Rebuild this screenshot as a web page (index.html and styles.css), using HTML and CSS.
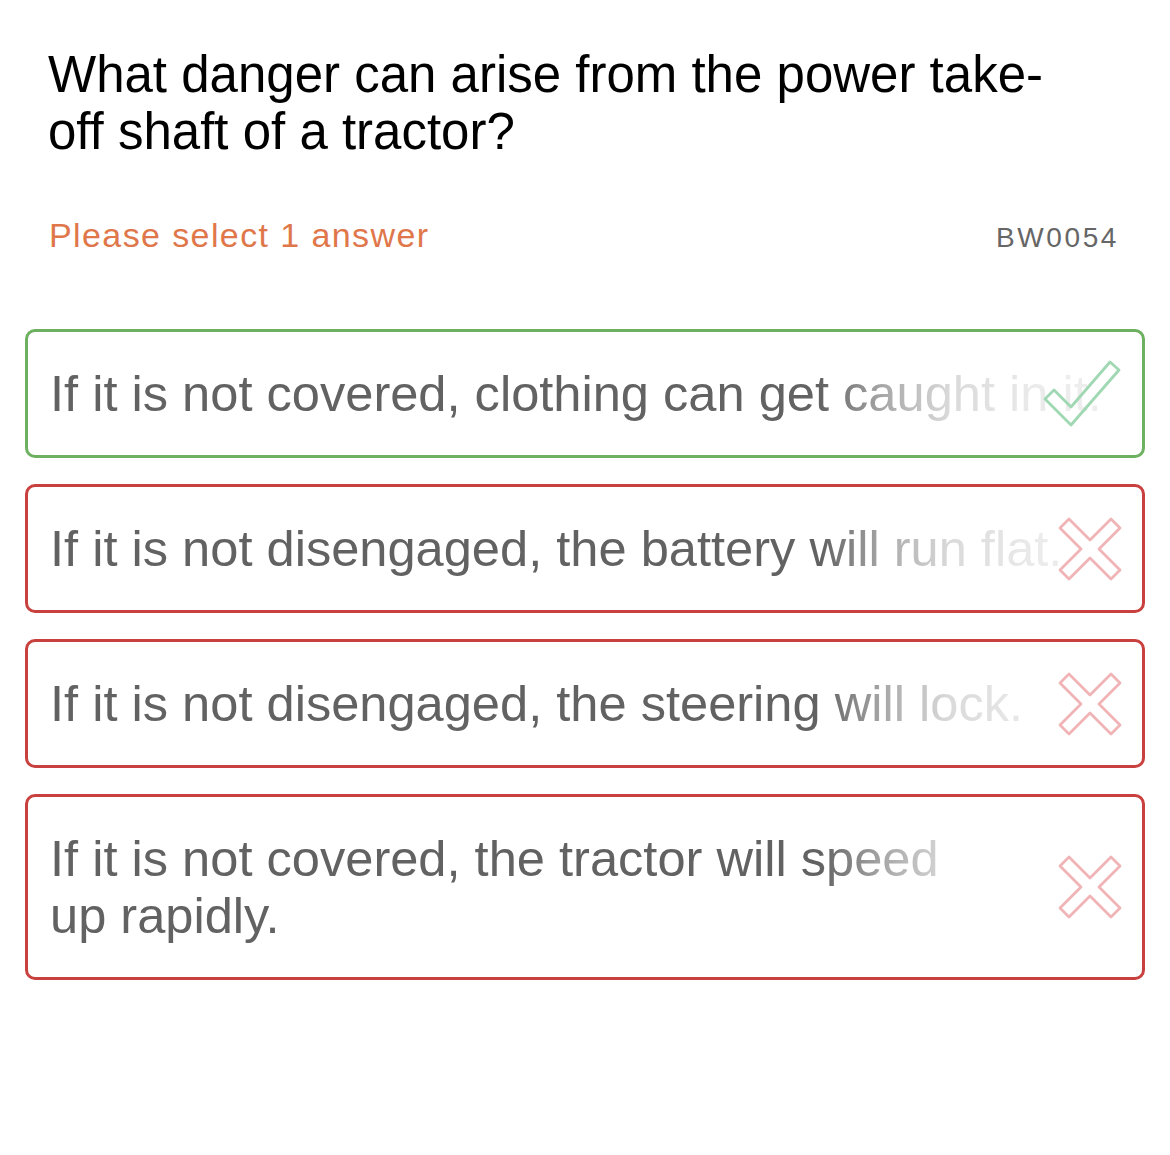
FILE: index.html
```html
<!DOCTYPE html>
<html lang="en">
<head>
    <meta charset="UTF-8">
    <meta name="viewport" content="width=device-width, initial-scale=1.0">
    <title>Question BW0054</title>
    <link rel="stylesheet" href="styles.css">
</head>
<body>
    <main class="quiz">
        <h1 class="question">What danger can arise from the power take-off shaft of a tractor?</h1>

        <div class="meta">
            <span class="hint">Please select 1 answer</span>
            <span class="code">BW0054</span>
        </div>

        <ul class="answers">
            <!-- correct answer -->
            <li class="answer correct">
                <span class="answer-text">If it is not covered, clothing can get caught in it.</span>
                <svg class="mark mark-check" viewBox="0 0 80 72" width="80" height="72">
                    <polygon points="3,41 12,32 29,49 68,4 77,12 29,67" />
                </svg>
            </li>

            <li class="answer wrong">
                <span class="answer-text">If it is not disengaged, the battery will run flat.</span>
                <svg class="mark mark-cross" viewBox="0 0 64 64" width="64" height="64">
                    <polygon points="2,11 11,2 32,23 53,2 62,11 41,32 62,53 53,62 32,41 11,62 2,53 23,32" />
                </svg>
            </li>

            <li class="answer wrong">
                <span class="answer-text">If it is not disengaged, the steering will lock.</span>
                <svg class="mark mark-cross" viewBox="0 0 64 64" width="64" height="64">
                    <polygon points="2,11 11,2 32,23 53,2 62,11 41,32 62,53 53,62 32,41 11,62 2,53 23,32" />
                </svg>
            </li>

            <li class="answer wrong">
                <span class="answer-text">If it is not covered, the tractor will speed<br>up rapidly.</span>
                <svg class="mark mark-cross" viewBox="0 0 64 64" width="64" height="64">
                    <polygon points="2,11 11,2 32,23 53,2 62,11 41,32 62,53 53,62 32,41 11,62 2,53 23,32" />
                </svg>
            </li>
        </ul>
    </main>
</body>
</html>
```

FILE: styles.css
```css
body {
    font-family: "Liberation Sans", Arial, sans-serif;
    background-color: #ffffff;
    margin: 0;
    padding: 0;
}
.quiz {
    padding: 46px 25px 40px;
}
.question {
    margin: 0 0 0 23px;
    font-size: 51px;
    line-height: 57px;
    font-weight: normal;
    color: #000;
    padding-right: 90px;
}
.meta {
    display: flex;
    justify-content: space-between;
    align-items: baseline;
    margin: 55px 26px 0 24px;
    line-height: 40px;
}
.hint {
    font-size: 34px;
    letter-spacing: 1.4px;
    color: #e0774b;
}
.code {
    font-size: 28px;
    letter-spacing: 2.6px;
    color: #666;
}
.answers {
    list-style: none;
    margin: 71px 0 0;
    padding: 0;
    display: flex;
    flex-direction: column;
    gap: 26px;
}
.answer {
    position: relative;
    padding: 33px 22px 33px;
    border: 3px solid #c9413e;
    border-radius: 10px;
    font-size: 50.6px;
    line-height: 57px;
    color: #626262;
}
.answer.correct {
    border-color: #6cb060;
}
.answer-text {
    display: block;
    white-space: nowrap;
    -webkit-mask-image: linear-gradient(to right, #000 0, #000 72%, rgba(0, 0, 0, 0.55) 78%, rgba(0, 0, 0, 0.24) 84%, rgba(0, 0, 0, 0.13) 92%, rgba(0, 0, 0, 0.1) 100%);
    mask-image: linear-gradient(to right, #000 0, #000 72%, rgba(0, 0, 0, 0.55) 78%, rgba(0, 0, 0, 0.24) 84%, rgba(0, 0, 0, 0.13) 92%, rgba(0, 0, 0, 0.1) 100%);
}
.mark {
    position: absolute;
    top: 50%;
    right: 20px;
    transform: translateY(-50%);
}
.mark polygon {
    fill: none;
    stroke-width: 2.8;
    stroke-linejoin: round;
}
.mark-check polygon {
    stroke: #9fd8b2;
}
.mark-cross polygon {
    stroke: #f0b4b7;
}
```
